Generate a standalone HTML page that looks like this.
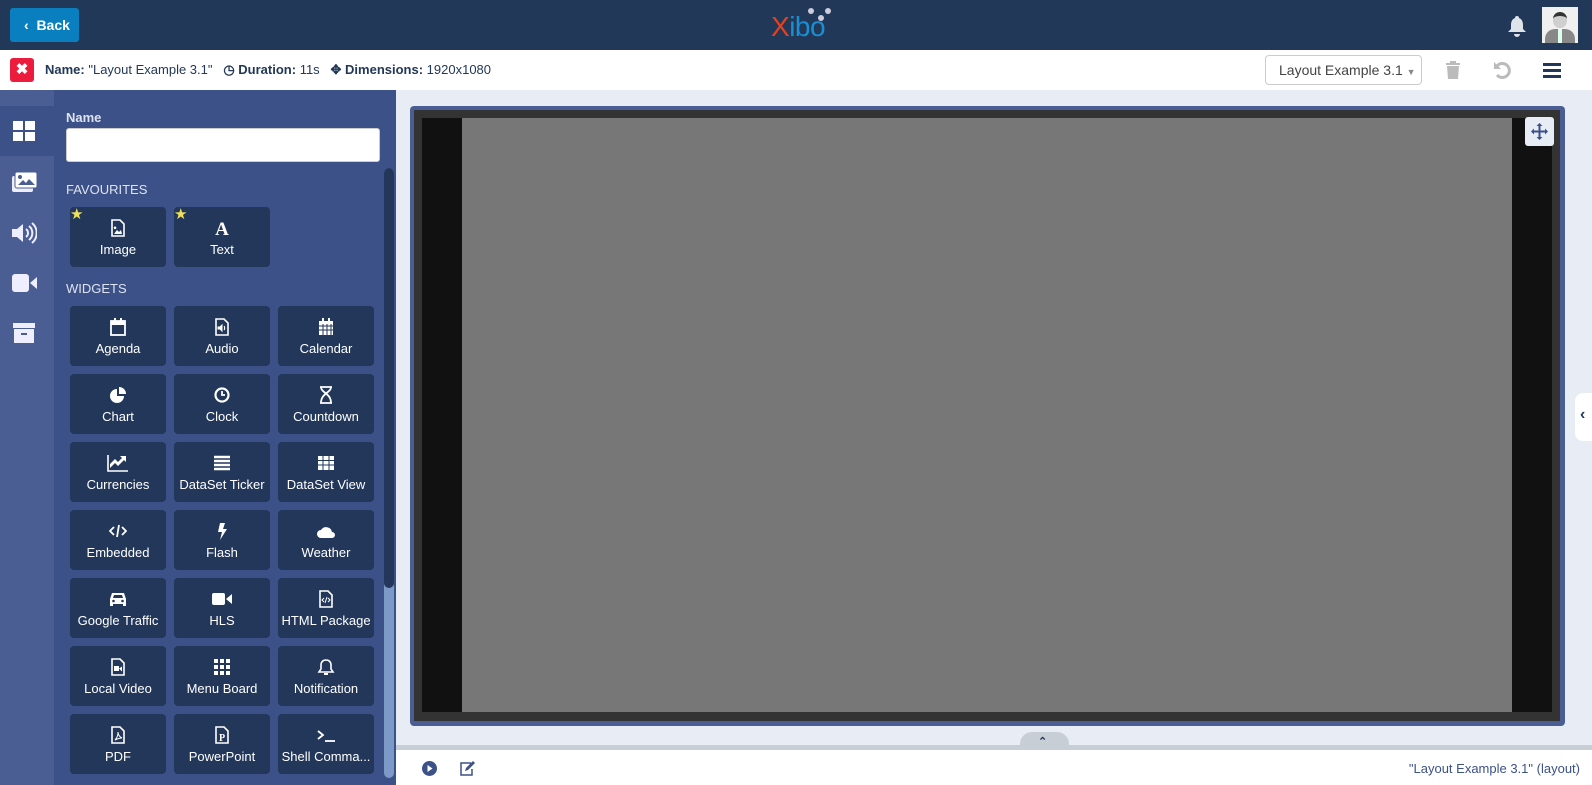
<!DOCTYPE html>
<html><head><meta charset="utf-8"><style>
*{box-sizing:border-box;margin:0;padding:0}
body{width:1592px;height:785px;overflow:hidden;font-family:"Liberation Sans",sans-serif;background:#e8ecf5;position:relative}
.a{position:absolute}
.top{left:0;top:0;width:1592px;height:50px;background:#223858}
.back{left:10px;top:8px;width:69px;height:34px;background:#0a7fbf;border-radius:3px;color:#fff;font-weight:bold;font-size:14px;line-height:34px;padding-left:14px}
.tb{left:0;top:50px;width:1592px;height:40px;background:#fff;font-size:13px;color:#223858}
.lc{left:0;top:90px;width:54px;height:695px;background:#4a5e94}
.panel{left:54px;top:90px;width:342px;height:695px;background:#3d5189}
.tile{position:absolute;width:96px;height:60px;background:#22375a;border-radius:4px;color:#fff;font-size:13px;text-align:center}
.tile svg{position:absolute;left:39px;top:12px}
.tile span{position:absolute;left:0;right:0;top:35px;white-space:nowrap}
.lbl{color:#dde3f0;font-size:13px}
</style></head><body>
<div class="a top"></div>
<div class="a back">‹&nbsp;&nbsp;Back</div>
<div class="a" style="left:771px;top:12px;font-size:28px;line-height:30px;letter-spacing:-0.5px"><span style="color:#e8401c">X</span><span style="color:#1a8fd0">ibo</span></div>
<div class="a" style="left:808px;top:8px;width:6px;height:6px;border-radius:50%;background:#ccd"></div>
<div class="a" style="left:825px;top:8px;width:6px;height:6px;border-radius:50%;background:#ccd"></div>
<div class="a" style="left:818px;top:15px;width:6px;height:6px;border-radius:50%;background:#ccd"></div>
<svg class="a" style="left:1507px;top:15px" width="20" height="22" viewBox="0 0 20 22"><path d="M10 1a2 2 0 0 1 2 2c3 1 4 4 4 7v4l3 3H1l3-3v-4c0-3 1-6 4-7a2 2 0 0 1 2-2zM7 19h6a3 3 0 0 1-6 0z" fill="#dfe3ea"/></svg>
<div class="a" style="left:1542px;top:7px;width:36px;height:36px;background:#f0f0f0;overflow:hidden">
<div class="a" style="left:11px;top:5px;width:14px;height:16px;border-radius:7px;background:#cfcfcf;border-top:4px solid #333"></div>
<div class="a" style="left:3px;top:22px;width:30px;height:18px;border-radius:10px 10px 0 0;background:#888"></div>
<div class="a" style="left:16px;top:22px;width:4px;height:14px;background:#dfe"></div></div>

<div class="a tb"></div>
<div class="a" style="left:10px;top:58px;width:24px;height:24px;background:#ec1d3c;border-radius:3px;color:#fff;font-size:15px;font-weight:bold;text-align:center;line-height:24px">✖</div>
<div class="a" style="left:45px;top:62px;font-size:13px;color:#223858;white-space:nowrap"><b>Name:</b> "Layout Example 3.1" &nbsp; <b>◷ Duration:</b> 11s &nbsp; <b>✥ Dimensions:</b> 1920x1080</div>
<div class="a" style="left:1265px;top:55px;width:157px;height:30px;border:1px solid #ccc;border-radius:4px;font-size:14px;color:#444;line-height:28px;padding-left:13px">Layout Example 3.1 <span style="font-size:9px;color:#888">▼</span></div>
<svg class="a" style="left:1444px;top:60px" width="18" height="20" viewBox="0 0 18 20"><path d="M2 3h14v2H2zM6 1h6v2H6zM3 6h12l-1 13H4z" fill="#bbb"/></svg>
<svg class="a" style="left:1493px;top:60px" width="20" height="20" viewBox="0 0 20 20"><path d="M4 6A7 7 0 1 1 4 15" fill="none" stroke="#bbb" stroke-width="3"/><path d="M1 2v7h7z" fill="#bbb"/></svg>
<div class="a" style="left:1543px;top:63px;width:18px;height:3px;background:#223858;box-shadow:0 6px 0 #223858,0 12px 0 #223858"></div>

<div class="a lc"></div>
<div class="a" style="left:0;top:106px;width:54px;height:50px;background:#3d5189"></div>
<svg class="a" style="left:13px;top:121px" width="22" height="20"><rect x="0" y="0" width="10" height="9" fill="#fff"/><rect x="12" y="0" width="10" height="9" fill="#fff"/><rect x="0" y="11" width="10" height="9" fill="#fff"/><rect x="12" y="11" width="10" height="9" fill="#fff"/></svg>
<svg class="a" style="left:12px;top:172px" width="25" height="21"><rect x="0" y="4" width="21" height="16" rx="2" fill="#eef"/><rect x="3" y="0" width="22" height="16" rx="2" fill="#fff" stroke="#4a5e94"/><path d="M6 13l5-5 3 3 3-4 6 6z" fill="#4a5e94"/><circle cx="8" cy="5" r="2" fill="#4a5e94"/></svg>
<svg class="a" style="left:12px;top:222px" width="25" height="22"><path d="M0 7h5l6-5v18l-6-5H0z" fill="#eef"/><path d="M14 7a5 5 0 0 1 0 8M17 4a9 9 0 0 1 0 14M20 1a13 13 0 0 1 0 20" stroke="#eef" stroke-width="2" fill="none"/></svg>
<svg class="a" style="left:12px;top:274px" width="25" height="18"><rect x="0" y="0" width="17" height="18" rx="3" fill="#eef"/><path d="M18 9l7-6v12z" fill="#eef"/></svg>
<svg class="a" style="left:13px;top:323px" width="22" height="20"><rect x="0" y="0" width="22" height="5" fill="#eef"/><rect x="1" y="6" width="20" height="14" fill="#eef"/><rect x="8" y="10" width="6" height="2" fill="#4a5e94"/></svg>

<div class="a panel"></div>
<div class="a lbl" style="left:66px;top:110px;font-weight:bold">Name</div>
<div class="a" style="left:66px;top:128px;width:314px;height:34px;background:#fff;border-radius:3px;border:1px solid #ccc"></div>
<div class="a lbl" style="left:66px;top:182px">FAVOURITES</div>
<div class="a lbl" style="left:66px;top:281px">WIDGETS</div>
<div class="a" style="left:384px;top:168px;width:10px;height:610px;background:#7d99c8;border-radius:5px"></div>
<div class="a" style="left:384px;top:168px;width:10px;height:420px;background:#22375a;border-radius:5px"></div>

<div class="tile" style="left:70px;top:207px"><svg width="18" height="18" viewBox="0 0 18 18"><path d="M3 1h8l4 4v12H3z" fill="none" stroke="#fff" stroke-width="1.6"/><path d="M5 15l3-4 2 2 2-2 1 4z M6 7.5a1.3 1.3 0 1 0 .1 0" fill="#fff"/></svg><span>Image</span><i class="a" style="left:0;top:-2px;color:#f0e05a;font-style:normal;font-size:15px">★</i></div>
<div class="tile" style="left:174px;top:207px"><svg width="18" height="18"><text x="9" y="16" text-anchor="middle" font-family="Liberation Serif" font-weight="bold" font-size="19" fill="#fff">A</text></svg><span>Text</span><i class="a" style="left:0;top:-2px;color:#f0e05a;font-style:normal;font-size:15px">★</i></div>

<div class="tile" style="left:70px;top:306px"><svg width="18" height="18"><rect x="2" y="3" width="14" height="14" fill="none" stroke="#fff" stroke-width="1.8"/><rect x="2" y="3" width="14" height="4" fill="#fff"/><rect x="5" y="0" width="2" height="4" fill="#fff"/><rect x="11" y="0" width="2" height="4" fill="#fff"/></svg><span>Agenda</span></div>
<div class="tile" style="left:174px;top:306px"><svg width="18" height="18"><path d="M3 1h8l4 4v12H3z" fill="none" stroke="#fff" stroke-width="1.6"/><path d="M5 9h2l2-2v6l-2-2H5z M11 8a3 3 0 0 1 0 4" fill="#fff" stroke="#fff"/></svg><span>Audio</span></div>
<div class="tile" style="left:278px;top:306px"><svg width="18" height="18"><rect x="2" y="3" width="14" height="14" fill="#fff"/><path d="M2 8h14M2 12h14M6 6v11M10 6v11M14 6v11" stroke="#22375a"/><rect x="5" y="0" width="2" height="4" fill="#fff"/><rect x="11" y="0" width="2" height="4" fill="#fff"/></svg><span>Calendar</span></div>

<div class="tile" style="left:70px;top:374px"><svg width="18" height="18"><path d="M8 3a7 7 0 1 0 7 7H8z" fill="#fff"/><path d="M10 1a7 7 0 0 1 7 7h-7z" fill="#fff"/></svg><span>Chart</span></div>
<div class="tile" style="left:174px;top:374px"><svg width="18" height="18"><circle cx="9" cy="9" r="6.5" fill="none" stroke="#fff" stroke-width="2.2"/><path d="M9 5v4h3" stroke="#fff" stroke-width="1.8" fill="none"/></svg><span>Clock</span></div>
<div class="tile" style="left:278px;top:374px"><svg width="18" height="18"><path d="M3 1h12M3 17h12M4 1c0 6 10 6 10 16M14 1c0 6-10 6-10 16" stroke="#fff" stroke-width="1.8" fill="none"/></svg><span>Countdown</span></div>

<div class="tile" style="left:70px;top:442px"><svg width="22" height="18" style="left:37px"><path d="M1 1v16h20" stroke="#fff" stroke-width="1.6" fill="none"/><path d="M3 14l5-5 3 3 6-6 2 2V2h-6l2 2-4 4-3-3-5 5z" fill="#fff"/></svg><span>Currencies</span></div>
<div class="tile" style="left:174px;top:442px"><svg width="18" height="18"><path d="M1 3h16M1 7h16M1 11h16M1 15h16" stroke="#fff" stroke-width="2.6"/></svg><span>DataSet Ticker</span></div>
<div class="tile" style="left:278px;top:442px"><svg width="18" height="18"><rect x="1" y="2" width="16" height="14" fill="#fff"/><path d="M1 6.5h16M1 11h16M6 2v14M12 2v14" stroke="#22375a"/></svg><span>DataSet View</span></div>

<div class="tile" style="left:70px;top:510px"><svg width="18" height="18"><path d="M5 5L1 9l4 4M13 5l4 4-4 4M10 3L8 15" stroke="#fff" stroke-width="1.8" fill="none"/></svg><span>Embedded</span></div>
<div class="tile" style="left:174px;top:510px"><svg width="18" height="18"><path d="M7 1h5l-2 6h4l-7 11 2-8H5z" fill="#fff"/></svg><span>Flash</span></div>
<div class="tile" style="left:278px;top:510px"><svg width="20" height="18" style="left:38px"><path d="M5 16a4 4 0 0 1 0-8 6 6 0 0 1 11 2 3 3 0 0 1 0 6z" fill="#fff"/></svg><span>Weather</span></div>

<div class="tile" style="left:70px;top:578px"><svg width="20" height="18" style="left:38px"><path d="M4 3h12l2 6v7h-3v-2H5v2H2V9z" fill="#fff"/><path d="M6 5h8l1 3H5z" fill="#22375a"/><circle cx="5.5" cy="11" r="1.3" fill="#22375a"/><circle cx="14.5" cy="11" r="1.3" fill="#22375a"/></svg><span>Google Traffic</span></div>
<div class="tile" style="left:174px;top:578px"><svg width="20" height="18" style="left:38px"><rect x="0" y="3" width="13" height="12" rx="2" fill="#fff"/><path d="M14 9l6-5v10z" fill="#fff"/></svg><span>HLS</span></div>
<div class="tile" style="left:278px;top:578px"><svg width="18" height="18"><path d="M3 1h8l4 4v12H3z" fill="none" stroke="#fff" stroke-width="1.6"/><path d="M7 8l-2 2 2 2M11 8l2 2-2 2M10 7l-2 6" stroke="#fff" fill="none"/></svg><span>HTML Package</span></div>

<div class="tile" style="left:70px;top:646px"><svg width="18" height="18"><path d="M3 1h8l4 4v12H3z" fill="none" stroke="#fff" stroke-width="1.6"/><rect x="5" y="8" width="5" height="5" fill="#fff"/><path d="M10 10.5l3-2v5z" fill="#fff"/></svg><span>Local Video</span></div>
<div class="tile" style="left:174px;top:646px"><svg width="18" height="18"><path d="M1 3h16M1 9h16M1 15h16" stroke="#fff" stroke-width="4" stroke-dasharray="4 2"/></svg><span>Menu Board</span></div>
<div class="tile" style="left:278px;top:646px"><svg width="18" height="18"><path d="M9 2c3 0 5 2 5 5v4l2 3H2l2-3V7c0-3 2-5 5-5z" fill="none" stroke="#fff" stroke-width="1.6"/><path d="M7 16h4" stroke="#fff" stroke-width="2"/></svg><span>Notification</span></div>

<div class="tile" style="left:70px;top:714px"><svg width="18" height="18"><path d="M3 1h8l4 4v12H3z" fill="none" stroke="#fff" stroke-width="1.6"/><path d="M6 14c2-2 3-5 3-8 0 3 2 5 4 6-3 0-5 1-7 2z" fill="none" stroke="#fff"/></svg><span>PDF</span></div>
<div class="tile" style="left:174px;top:714px"><svg width="18" height="18"><path d="M3 1h8l4 4v12H3z" fill="none" stroke="#fff" stroke-width="1.6"/><text x="9" y="15" text-anchor="middle" font-family="Liberation Serif" font-weight="bold" font-size="10" fill="#fff">P</text></svg><span>PowerPoint</span></div>
<div class="tile" style="left:278px;top:714px"><svg width="20" height="18" style="left:38px"><path d="M2 5l5 4-5 4" stroke="#fff" stroke-width="1.8" fill="none"/><path d="M9 15h10" stroke="#fff" stroke-width="1.8"/></svg><span>Shell Comma...</span></div>

<div class="a" style="left:410px;top:106px;width:1155px;height:620px;background:#4a5e94;border-radius:4px"></div>
<div class="a" style="left:414px;top:110px;width:1146px;height:611px;background:#333"></div>
<div class="a" style="left:422px;top:118px;width:1130px;height:594px;background:#111"></div>
<div class="a" style="left:462px;top:118px;width:1050px;height:594px;background:#777"></div>
<div class="a" style="left:1525px;top:117px;width:29px;height:29px;background:#e8ecf5;border-radius:3px"></div>
<svg class="a" style="left:1531px;top:123px" width="17" height="17" viewBox="0 0 17 17"><path d="M8.5 0l3 3h-2v4.5H14v-2l3 3-3 3v-2H9.5V14h2l-3 3-3-3h2V9.5H3v2l-3-3 3-3v2h4.5V3h-2z" fill="#3d5189"/></svg>
<div class="a" style="left:1575px;top:393px;width:20px;height:48px;background:#fff;border-radius:8px 0 0 8px"></div>
<div class="a" style="left:1580px;top:406px;font-size:16px;font-weight:bold;color:#22375a">‹</div>

<div class="a" style="left:1020px;top:732px;width:49px;height:20px;background:#c8ced6;border-radius:12px 12px 0 0"></div>
<div class="a" style="left:1038px;top:735px;font-size:11px;color:#22375a;font-weight:bold">⌃</div>
<div class="a" style="left:396px;top:745px;width:1196px;height:5px;background:#c8ced6"></div>
<div class="a" style="left:396px;top:750px;width:1196px;height:35px;background:#fff"></div>
<svg class="a" style="left:422px;top:761px" width="15" height="15"><circle cx="7.5" cy="7.5" r="7.5" fill="#3d5189"/><path d="M5.5 4v7l5-3.5z" fill="#fff"/></svg>
<svg class="a" style="left:459px;top:760px" width="17" height="16"><path d="M12 3H2v12h11V9" fill="none" stroke="#3d5189" stroke-width="1.5"/><path d="M6 11l1-3 7-7 2 2-7 7z" fill="#3d5189"/></svg>
<div class="a" style="right:12px;top:761px;font-size:13px;color:#3d5189">"Layout Example 3.1" (layout)</div>
</body></html>
